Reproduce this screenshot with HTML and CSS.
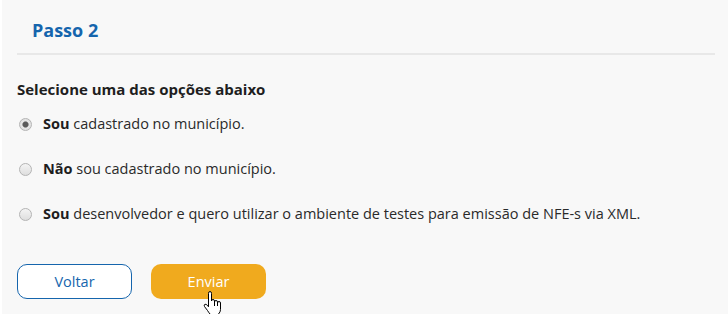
FILE: index.html
```html
<!DOCTYPE html>
<html lang="pt-BR">
<head>
<meta charset="utf-8">
<title>Passo 2</title>
<link rel="stylesheet" href="styles.css">
</head>
<body>
<main class="panel">
  <header class="step-header">
    <h2 class="step-title">Passo 2</h2>
  </header>
  <section class="step-body">
    <h3 class="question">Selecione uma das opções abaixo</h3>
    <div class="options">
      <label class="option"><input type="radio" name="op" class="radio" checked><span><b>Sou</b> cadastrado no município.</span></label>
      <label class="option"><input type="radio" name="op" class="radio"><span><b>Não</b> sou cadastrado no município.</span></label>
      <label class="option"><input type="radio" name="op" class="radio"><span><b>Sou</b> desenvolvedor e quero utilizar o ambiente de testes para emissão de NFE-s via XML.</span></label>
    </div>
    <div class="actions">
      <button class="btn btn-outline" type="button">Voltar</button>
      <button class="btn btn-primary" type="button">Enviar
        <svg class="cursor" width="20" height="26" viewBox="0 0 20 26" aria-hidden="true">
          <path d="M5.5 2.5 Q5.5 0.5 7 0.5 Q8.5 0.5 8.5 2.5 L8.5 10 Q8.5 8.5 10 8.5 Q11.5 8.5 11.5 10 L11.5 11 Q11.5 9.5 13 9.5 Q14.5 9.5 14.5 11 L14.5 12 Q14.5 10.5 16 10.5 Q17.5 10.5 17.5 12 L17.5 18.5 Q17.5 21 15.5 23 L15.5 25.5 L7.5 25.5 L7.5 23.5 Q6 22 4.5 19.5 L1.5 15.5 Q0.5 13.8 2 13.3 Q3.2 13 4.2 14.2 L5.5 15.8 Z" fill="#fff" stroke="#000" stroke-width="1" stroke-linejoin="round"/>
          <path d="M11.5 11 L11.5 15 M14.5 12 L14.5 15" stroke="#000" stroke-width="1" fill="none"/>
        </svg>
      </button>
    </div>
  </section>
</main>
</body>
</html>
```

FILE: styles.css
```css
* { box-sizing: border-box; }
html, body { margin: 0; padding: 0; background: #ffffff; }
body {
  font-family: "Open Sans", "Noto Sans", "DejaVu Sans", sans-serif;
  color: #222222;
}
.panel {
  margin-left: 2px;
  height: 314px;
  background: #f8f8f8;
  padding: 0 13px 0 15px;
}
.step-header {
  padding: 18px 0 11px 15px;
  border-bottom: 2px solid #e8e8e8;
}
.step-title {
  margin: 0;
  font-size: 18px;
  line-height: 24px;
  font-weight: 700;
  color: #1565ad;
}
.step-body {
  padding-top: 24px;
}
.question {
  margin: 0;
  font-size: 15px;
  line-height: 20px;
  font-weight: 700;
  color: #1e1e1e;
}
.options {
  display: flex;
  flex-direction: column;
  gap: 25px;
  margin-top: 15px;
}
.option {
  display: flex;
  align-items: center;
  gap: 11px;
  font-size: 14.5px;
  line-height: 20px;
  color: #2a2a2a;
  padding-left: 2px;
}
.option b { font-weight: 700; color: #1e1e1e; }
.radio {
  appearance: none;
  -webkit-appearance: none;
  margin: 0;
  width: 13px;
  height: 13px;
  border-radius: 50%;
  border: 1px solid #b4b4b4;
  background: linear-gradient(#f4f4f4, #dedede);
  flex: none;
}
.radio:checked {
  background: radial-gradient(circle, #5a5a5a 0 2.5px, #9a9a9a 3px, #e6e6e6 3.6px, #dcdcdc 100%);
}
.actions {
  display: flex;
  gap: 19px;
  margin-top: 40px;
}
.btn {
  width: 115px;
  height: 35px;
  border-radius: 10px;
  font-family: inherit;
  font-size: 14.5px;
  line-height: 20px;
  padding: 0;
  cursor: pointer;
}
.btn-outline {
  background: #ffffff;
  color: #1565ad;
  border: 1.5px solid #1565ad;
}
.btn-primary {
  position: relative;
  background: #f0aa1e;
  color: #ffffff;
  border: none;
}
.cursor {
  position: absolute;
  left: 52px;
  top: 27px;
}
```
